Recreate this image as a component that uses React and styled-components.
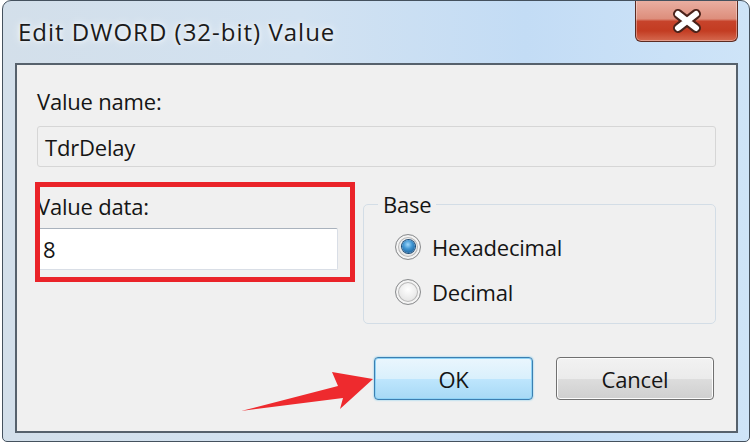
import React, { useState } from "react";
import styled, { createGlobalStyle } from "styled-components";

const GlobalStyle = createGlobalStyle`
  html, body {
    margin: 0;
    padding: 0;
    background: #ffffff;
  }
  body {
    font-family: "Open Sans", "Liberation Sans", sans-serif;
    color: #151515;
  }
`;

const Window = styled.div`
  position: relative;
  margin-left: 2px;
  width: 748px;
  height: 442px;
  box-sizing: border-box;
  border: 1px solid #44515e;
  border-radius: 9px 9px 5px 5px;
  background: linear-gradient(90deg, #d3dfea 0%, #d2e2f1 40%, #c3dcf5 70%, #cee4f8 100%);
  display: flex;
  flex-direction: column;
  overflow: hidden;
`;

const TitleBar = styled.div`
  height: 62px;
  flex-shrink: 0;
  display: flex;
  align-items: flex-start;
  justify-content: space-between;
  padding-left: 15px;
`;

const Title = styled.div`
  margin-top: 15px;
  font-size: 24px;
  line-height: 32px;
  letter-spacing: 1px;
  color: #1b1b1b;
  text-shadow: 0 0 10px rgba(255, 255, 255, 0.95), 0 0 4px rgba(255, 255, 255, 0.8);
`;

const CloseButton = styled.div`
  width: 103px;
  height: 42px;
  margin-right: 11px;
  margin-top: -1px;
  box-sizing: border-box;
  border: 1px solid #5c2b22;
  border-top: none;
  border-radius: 0 0 6px 6px;
  background: linear-gradient(
    180deg,
    #eab0a3 0%,
    #dd8e7c 46%,
    #c7432b 52%,
    #c33c22 75%,
    #d56a50 100%
  );
  box-shadow: inset 0 0 0 1px rgba(255, 255, 255, 0.35);
  display: flex;
  align-items: center;
  justify-content: center;
`;

const Client = styled.div`
  flex: 1;
  margin: 0 11px 8px 12px;
  border: 2px solid #56616c;
  background: #f0f0f0;
  padding: 21px 20px 0 20px;
  display: flex;
  flex-direction: column;
  font-size: 22px;
  letter-spacing: -0.2px;
`;

const Label = styled.div`
  line-height: 30px;
`;

const NameBox = styled.div`
  margin-top: 10px;
  height: 41px;
  box-sizing: border-box;
  border: 1px solid #d6d6d6;
  border-radius: 3px;
  background: #f0f0f0;
  padding-left: 7px;
  display: flex;
  align-items: center;
`;

const Row = styled.div`
  margin-top: 23px;
  display: flex;
  align-items: flex-start;
  gap: 25px;
`;

const DataColumn = styled.div`
  position: relative;
  width: 301px;
  flex-shrink: 0;
`;

const DataLabel = styled.div`
  line-height: 32px;
`;

const DataInput = styled.input`
  display: block;
  margin-top: 6px;
  width: 100%;
  height: 42px;
  box-sizing: border-box;
  border: 1px solid #d9dee6;
  border-top-color: #a9b2bd;
  border-radius: 2px;
  background: #ffffff;
  padding: 0 5px;
  font: inherit;
  letter-spacing: inherit;
  color: #151515;
  outline: none;
`;

const RedFrame = styled.div`
  position: absolute;
  left: -2px;
  top: -8px;
  width: 320px;
  height: 100px;
  box-sizing: border-box;
  border: 5px solid #ea2329;
  pointer-events: none;
`;

const Group = styled.fieldset`
  flex: 1;
  margin: 0;
  min-width: 0;
  padding: 6px 0 9px 14px;
  border: 1px solid #d3dde6;
  border-radius: 5px;
`;

const Legend = styled.legend`
  padding: 0 5px;
  line-height: 28px;
`;

const RadioRow = styled.label`
  height: 45px;
  display: flex;
  align-items: center;
  gap: 11px;
  padding-left: 17px;
  cursor: default;
`;

const RadioCircle = styled.span`
  width: 26px;
  height: 26px;
  box-sizing: border-box;
  border-radius: 50%;
  border: 1px solid #8a8c8e;
  background: radial-gradient(circle at 50% 40%, #ffffff 0%, #e8e8e8 55%, #c9c9c9 100%);
  box-shadow: inset 0 0 0 2px #f4f4f4, inset 0 0 0 3px #b9b9b9;
  display: flex;
  align-items: center;
  justify-content: center;

  &::after {
    content: "";
    width: 13px;
    height: 13px;
    border-radius: 50%;
    display: ${(p) => (p.$checked ? "block" : "none")};
    background: radial-gradient(circle at 45% 35%, #9fd8fb 0%, #3f95d2 40%, #144f86 100%);
    box-shadow: 0 0 0 1px #1c4c78;
  }
`;

const ButtonRow = styled.div`
  margin-top: 33px;
  display: flex;
  justify-content: flex-end;
  gap: 23px;
  padding-right: 2px;
`;

const Button = styled.button`
  width: ${(p) => p.$width}px;
  height: 43px;
  box-sizing: border-box;
  border-radius: 4px;
  font: inherit;
  letter-spacing: inherit;
  color: #151515;
  border: 1px solid ${(p) => (p.$primary ? "#3c7fb1" : "#707070")};
  background: ${(p) =>
    p.$primary
      ? "linear-gradient(180deg, #eaf6fd 0%, #d9f0fc 50%, #bee6fd 51%, #a7d9f5 100%)"
      : "linear-gradient(180deg, #f2f2f2 0%, #ebebeb 50%, #dddddd 51%, #cfcfcf 100%)"};
  box-shadow: ${(p) =>
    p.$primary
      ? "inset 0 0 0 1px #8fd3f6, 0 0 2px #62c4ee"
      : "inset 0 0 0 1px #fcfcfc"};
  padding: 0;
`;

const ArrowLayer = styled.svg`
  position: absolute;
  left: -3px;
  top: -1px;
  width: 755px;
  height: 445px;
  pointer-events: none;
  overflow: visible;
`;

const CloseGlyph = () => (
  <svg width="34" height="24" viewBox="0 0 34 24">
    <path d="M8 5 L26 19 M26 5 L8 19" stroke="#4b231b" strokeWidth="10" strokeLinecap="round" />
    <path d="M8 5 L26 19 M26 5 L8 19" stroke="#ffffff" strokeWidth="6" strokeLinecap="round" />
  </svg>
);

const App = () => {
  const [value, setValue] = useState("8");
  const [base, setBase] = useState("hex");

  return (
    <>
      <GlobalStyle />
      <Window>
        <TitleBar>
          <Title>Edit DWORD (32-bit) Value</Title>
          <CloseButton>
            <CloseGlyph />
          </CloseButton>
        </TitleBar>
        <Client>
          <Label>Value name:</Label>
          <NameBox>TdrDelay</NameBox>
          <Row>
            <DataColumn>
              <DataLabel>Value data:</DataLabel>
              <DataInput value={value} onChange={(e) => setValue(e.target.value)} />
              <RedFrame />
            </DataColumn>
            <Group>
              <Legend>Base</Legend>
              <RadioRow onClick={() => setBase("hex")}>
                <RadioCircle $checked={base === "hex"} />
                Hexadecimal
              </RadioRow>
              <RadioRow onClick={() => setBase("dec")}>
                <RadioCircle $checked={base === "dec"} />
                Decimal
              </RadioRow>
            </Group>
          </Row>
          <ButtonRow>
            <Button $primary $width={159}>OK</Button>
            <Button $width={158}>Cancel</Button>
          </ButtonRow>
        </Client>
        <ArrowLayer viewBox="0 0 755 445">
          <polygon
            points="241,411 338,386 332,372 373,379 340,409 343,398"
            fill="#ee2a2e"
          />
        </ArrowLayer>
      </Window>
    </>
  );
};

export default App;
